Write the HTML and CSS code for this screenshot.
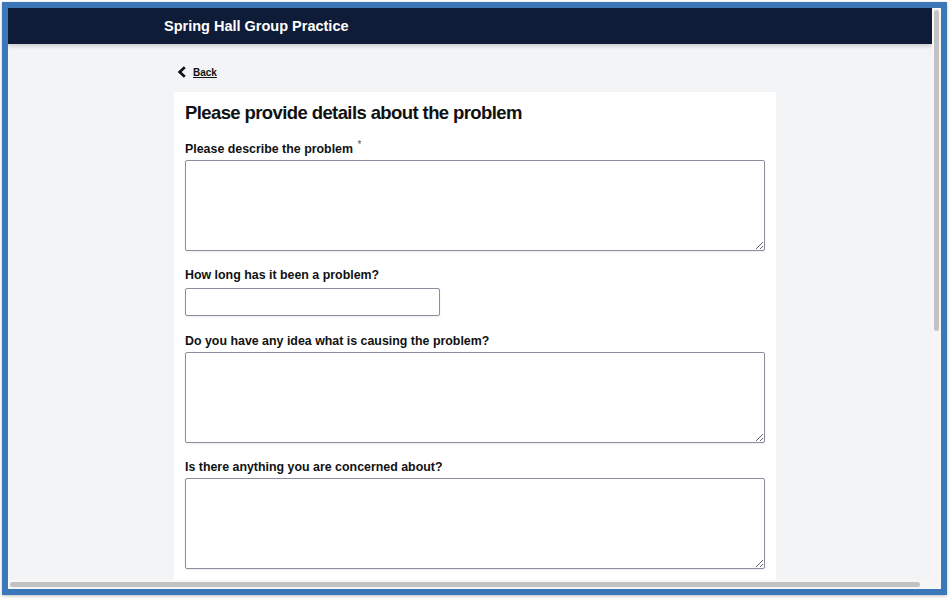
FILE: index.html
```html
<!DOCTYPE html>
<html lang="en">
<head>
  <meta charset="UTF-8">
  <title>Spring Hall Group Practice</title>
  <link rel="stylesheet" href="styles.css">
</head>
<body>
  <div class="window">
    <div class="viewport">
      <header class="topbar">
        <span class="brand">Spring Hall Group Practice</span>
      </header>

      <main class="page">
        <a class="back" href="#">
          <svg class="chev" width="10" height="12" viewBox="0 0 10 12"><path d="M7.8 1.2 L2.6 6 L7.8 10.8" fill="none" stroke="#111" stroke-width="2.6"/></svg>
          <span>Back</span>
        </a>

        <form class="card">
          <h1>Please provide details about the problem</h1>

          <div class="field">
            <label for="problem">Please describe the problem <sup>*</sup></label>
            <textarea id="problem"></textarea>
          </div>

          <div class="field short">
            <label for="duration">How long has it been a problem?</label>
            <input id="duration" type="text">
          </div>

          <div class="field">
            <label for="cause">Do you have any idea what is causing the problem?</label>
            <textarea id="cause"></textarea>
          </div>

          <div class="field">
            <label for="concern">Is there anything you are concerned about?</label>
            <textarea id="concern"></textarea>
          </div>
        </form>
      </main>
    </div>
    <div class="vbar"><div class="thumb"></div></div>
    <div class="hbar"><div class="thumb"></div></div>
    <div class="corner"></div>
  </div>
</body>
</html>
```

FILE: styles.css
```css
html, body { margin: 0; height: 100%; }
body { background: #fff; padding: 2px; box-sizing: border-box; font-family: "Liberation Sans", Arial, sans-serif; color: #111; }

.window {
  width: 945px; height: 593px; box-sizing: border-box;
  border: 6px solid #3c77ba;
  box-shadow: 0 1px 3px rgba(0,0,0,.25);
  display: grid; grid-template-columns: 1fr 9px; grid-template-rows: 1fr 9px;
  background: #f3f4f6;
}

.viewport { overflow: hidden; background: #f3f4f6; }

.topbar {
  height: 36px; background: #0f1c37; display: flex; align-items: center;
  padding-left: 156px; box-shadow: 0 2px 4px rgba(0,0,0,.18); position: relative;
}
.brand { color: #fff; font-weight: bold; font-size: 14.5px; }

.page { padding-left: 166px; width: 602px; }

.back { display: flex; align-items: center; gap: 6px; margin: 21px 0 0 3px; height: 14px; color: #111; text-decoration: none; }
.back span { font-size: 10px; font-weight: bold; text-decoration: underline; }

.card { background: #fff; margin-top: 13px; padding: 9px 11px 20px; display: flex; flex-direction: column; }
.card h1 { font-size: 18.5px; line-height: 24px; margin: 0 0 13px; font-weight: bold; letter-spacing: -0.6px; }

.field { display: flex; flex-direction: column; margin-bottom: 17px; }
.field.short { margin-bottom: 18px; }
.field label { font-size: 12.4px; font-weight: bold; line-height: 14px; margin-bottom: 4px; }
.field sup { font-size: 10px; color: #555; font-weight: normal; margin-left: 1px; }

textarea, input {
  border: 1px solid #8b8e9e; border-radius: 2px; box-sizing: border-box; background: #fff;
  box-shadow: 0 1px 2px rgba(0,0,0,.08); font: inherit; margin: 0;
}
textarea { width: 580px; height: 91px; }
input { width: 255px; height: 28px; margin-top: 2px; }

.vbar { background: #f6f6f6; display: flex; justify-content: center; padding-top: 2px; }
.vbar .thumb { width: 5px; height: 321px; background: #c2c2c2; border-radius: 3px; }
.hbar { background: #f6f6f6; padding: 2px 0 0 2px; }
.hbar .thumb { width: 910px; height: 5px; background: #c2c2c2; border-radius: 3px; }
.corner { background: #f6f6f6; }
```
